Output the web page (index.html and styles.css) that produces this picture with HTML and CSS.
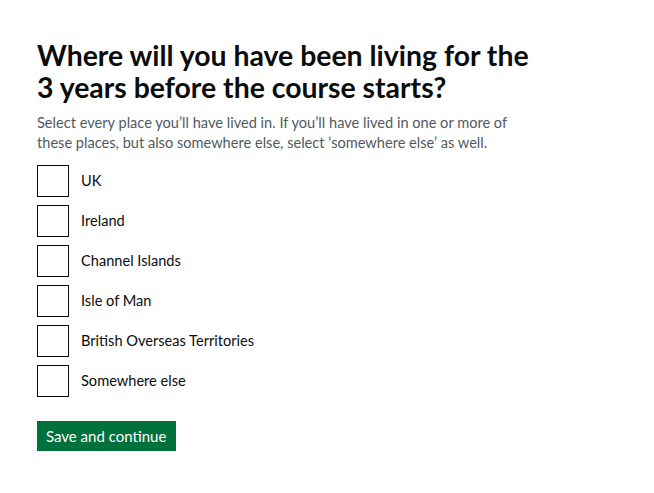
FILE: index.html
```html
<!DOCTYPE html>
<html lang="en">
<head>
<meta charset="utf-8">
<title>Where will you have been living</title>
<link rel="stylesheet" href="styles.css">
</head>
<body>
<main class="main">
  <form class="form">
    <fieldset class="fieldset">
      <legend class="legend"><h1 class="heading">Where will you have been living for the 3 years before the course starts?</h1></legend>
      <p class="hint">Select every place you’ll have lived in. If you’ll have lived in one or more of these places, but also somewhere else, select ‘somewhere else’ as well.</p>
      <div class="checkboxes">
        <label class="item"><input class="input" type="checkbox"><span class="box"></span><span class="label">UK</span></label>
        <label class="item"><input class="input" type="checkbox"><span class="box"></span><span class="label">Ireland</span></label>
        <label class="item"><input class="input" type="checkbox"><span class="box"></span><span class="label">Channel Islands</span></label>
        <label class="item"><input class="input" type="checkbox"><span class="box"></span><span class="label">Isle of Man</span></label>
        <label class="item"><input class="input" type="checkbox"><span class="box"></span><span class="label">British Overseas Territories</span></label>
        <label class="item"><input class="input" type="checkbox"><span class="box"></span><span class="label">Somewhere else</span></label>
      </div>
    </fieldset>
    <button class="button" type="button">Save and continue</button>
  </form>
</main>
</body>
</html>
```
FILE: styles.css
```css
* { box-sizing: border-box; }
html, body { margin: 0; padding: 0; background: #fff; }
body {
  font-family: Lato, "Noto Sans", "Liberation Sans", sans-serif;
  color: #0b0c0c;
}
.main { padding: 39px 37px 0 37px; }
.form { margin: 0; }
.fieldset { border: 0; margin: 0; padding: 0; min-width: 0; }
.legend { padding: 0; margin: 0; }
.heading {
  margin: 0;
  font-size: 28.4px;
  line-height: 32px;
  font-weight: 700;
  width: 510px;
}
.hint {
  margin: 10px 0 0 0;
  font-size: 14.6px;
  line-height: 20px;
  color: #505a5f;
  width: 490px;
}
.checkboxes {
  margin-top: 12px;
  display: flex;
  flex-direction: column;
  gap: 8px;
}
.item {
  display: flex;
  align-items: center;
  gap: 12px;
  height: 32px;
}
.input { position: absolute; opacity: 0; width: 0; height: 0; margin: 0; }
.box {
  width: 32px;
  height: 32px;
  border: 1px solid #0b0c0c;
  flex: none;
}
.label { font-size: 14.6px; line-height: 20px; }
.button {
  margin-top: 24px;
  display: inline-block;
  background: #00703c;
  color: #fff;
  border: 0;
  border-radius: 0;
  padding: 4px 9px 5px 9px;
  font-family: inherit;
  font-size: 15px;
  line-height: 20px;
  box-shadow: 0 2px 0 #002d18;
  width: 139px;
  height: 30px;
  text-align: left;
}
```
